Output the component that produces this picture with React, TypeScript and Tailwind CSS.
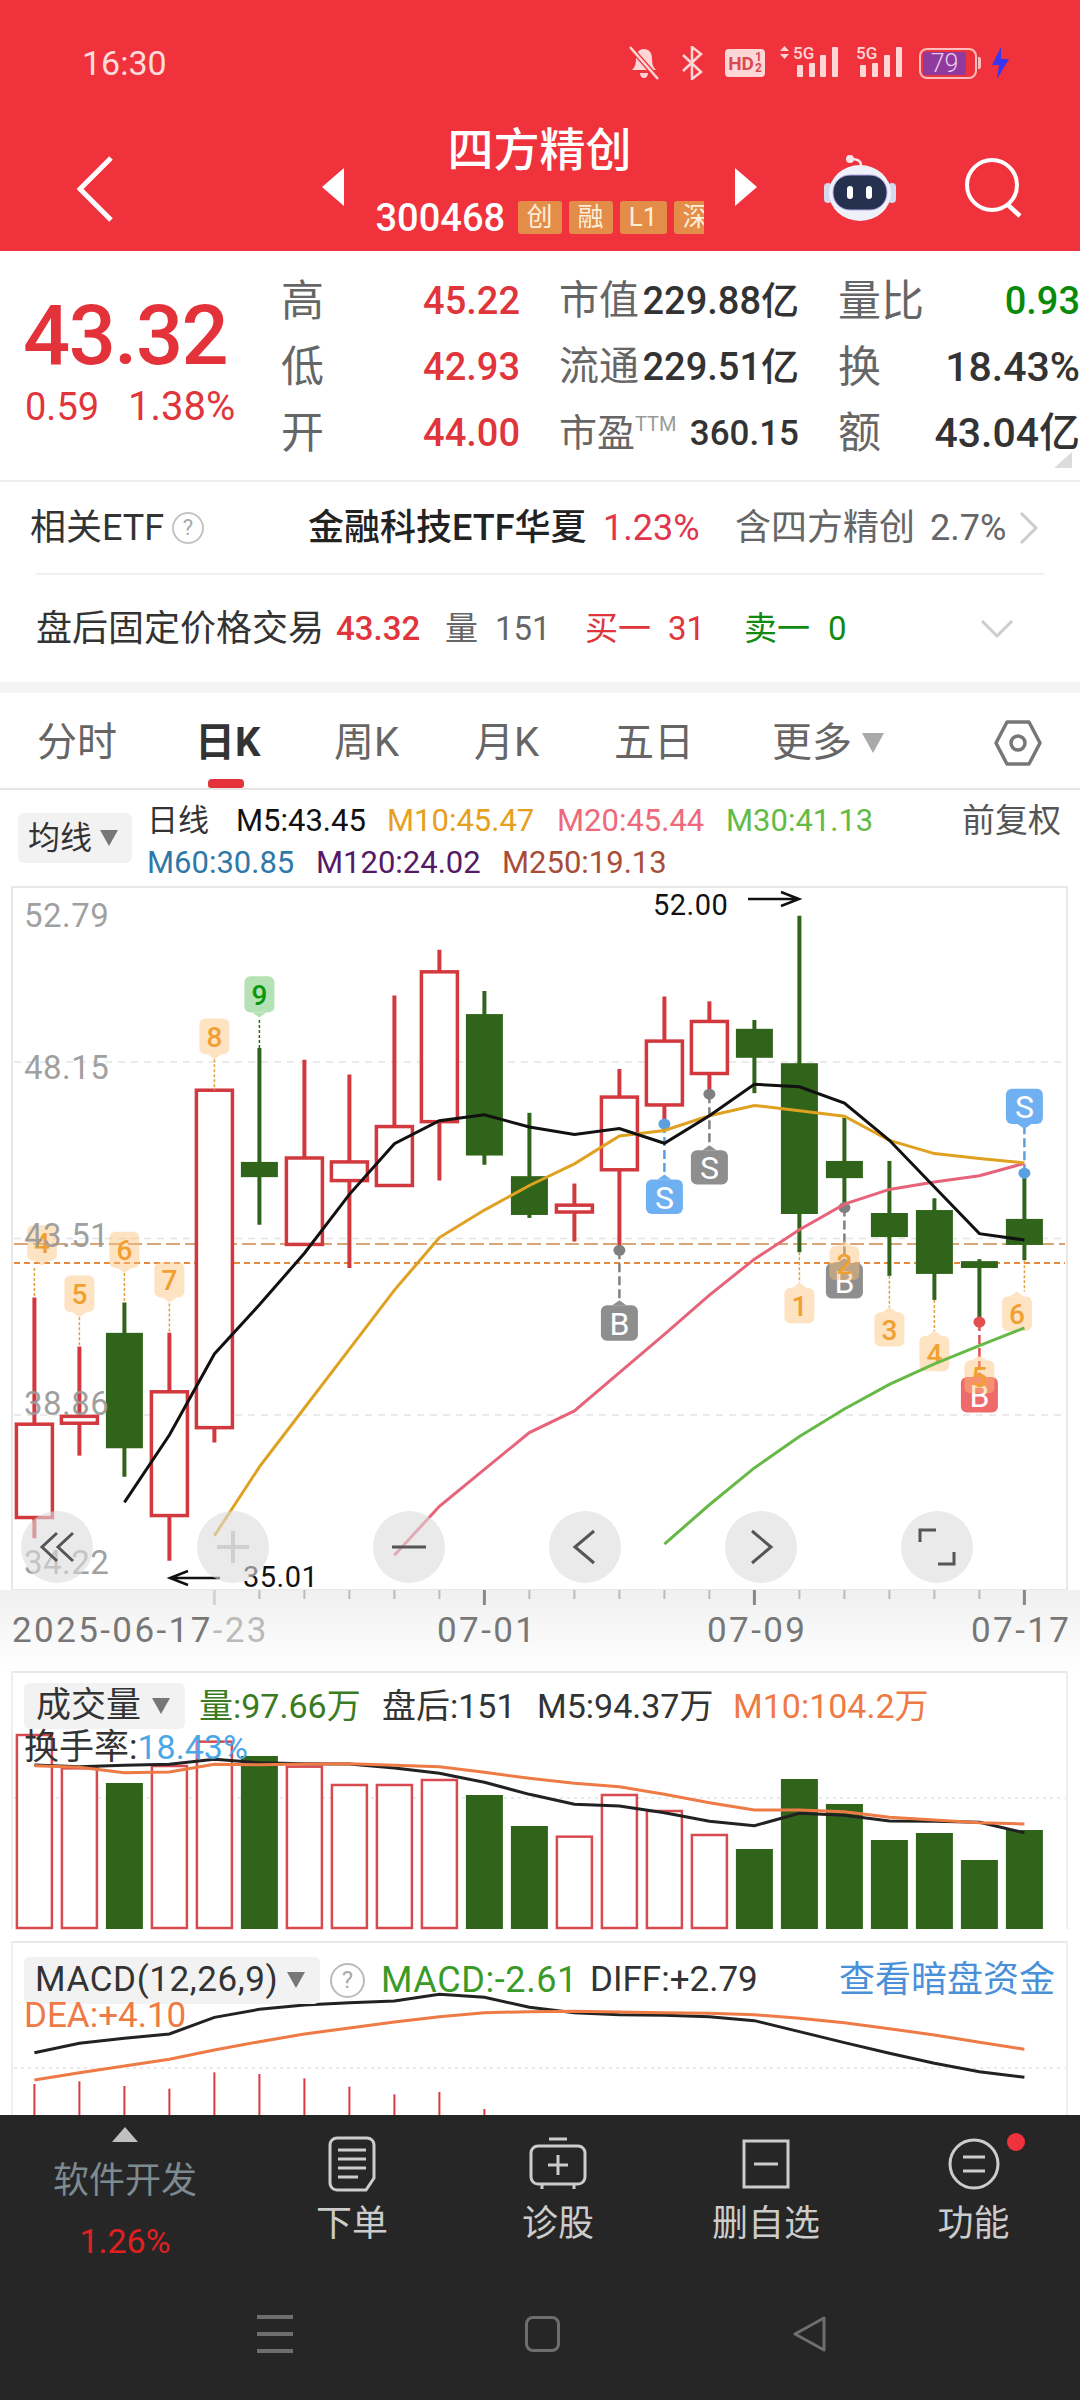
import React from "react";

const Y = (z: number) => z / 2.036 - 6;
const cx = (i: number) => 34.4 + 45 * i;
const RED = "#d1393f";
const GREEN = "#30641a";

const candles: [string, number, number, number, number][] = [
  ["r", 850, 1108, 1298, 1340], ["r", 950, 1092, 1106, 1172], ["g", 860, 922, 1157, 1215], ["r", 922, 1042, 1294, 1386],
  ["r", 428, 428, 1115, 1145], ["g", 342, 574, 605, 702], ["r", 366, 566, 742, 742], ["r", 396, 574, 612, 790],
  ["r", 235, 502, 622, 622], ["r", 142, 187, 492, 612], ["g", 226, 273, 561, 580], ["g", 474, 603, 682, 688],
  ["r", 618, 662, 676, 736], ["r", 385, 442, 590, 752], ["r", 237, 328, 458, 497], ["r", 247, 288, 394, 436],
  ["g", 285, 303, 362, 434], ["g", 73, 373, 680, 758], ["g", 484, 572, 607, 665], ["g", 572, 678, 727, 806],
  ["g", 648, 672, 802, 855], ["g", 772, 776, 790, 900], ["g", 598, 690, 743, 774],
];

const ma5 = [1267, 1130, 965, 865, 760, 640, 537, 490, 478, 503, 518, 506, 536, 480, 416, 421, 454, 530, 625, 720, 733];
const ma10 = [1335, 1195, 1075, 955, 835, 728, 672, 622, 578, 521, 510, 480, 459, 470, 481, 530, 557, 567, 576];
const ma20 = [1375, 1275, 1200, 1125, 1081, 1003, 925, 845, 772, 712, 660, 630, 615, 602, 577];
const ma30 = [1352, 1272, 1197, 1133, 1077, 1027, 985, 948, 912];

const pts = (arr: number[], start: number) => arr.map((z, k) => `${cx(start + k)},${Y(z)}`).join(" ");

const numTags: [number, number, number, string, boolean][] = [
  [42, 703, 775, "4", true], [cx(1), 805, 880, "5", true], [cx(2), 716, 790, "6", true], [cx(3), 778, 850, "7", true],
  [cx(4), 282, 355, "8", true], [cx(17), 830, 903, "1", false], [cx(18), 745, 815, "2", false], [cx(19), 880, 950, "3", false],
  [cx(20), 928, 1000, "4", false], [cx(21), 978, 1045, "5", false], [1017, 848, 918, "6", false],
];
const numLines: [number, number, number][] = [
  [0, 790, 850], [1, 890, 950], [2, 800, 860], [3, 862, 922], [4, 365, 428], [17, 758, 820], [19, 806, 870], [20, 855, 918], [22, 774, 838],
];
const trade: [number, number, number, string, string, number][] = [
  [13, 866, 938, "B", "#8e8e8e", 754], [14, 610, 680, "S", "#6fb0f2", 497], [15, 550, 620, "S", "#8e8e8e", 436],
  [18, 780, 852, "B", "#8e8e8e", 667], [21, 1012, 1084, "B", "#ef6a6a", 900], [22, 425, 497, "S", "#6fb0f2", 597],
];

function Tag({ x, t, b, up, fill, children, color, w = 30, alpha = 1 }: { x: number; t: number; b: number; up: boolean; fill: string; color: string; w?: number; alpha?: number; children: string }) {
  const top = Y(t);
  const bot = Y(b);
  const pointer = up ? `${x - 7},${top} ${x},${top - 5} ${x + 7},${top}` : `${x - 7},${bot} ${x},${bot + 5} ${x + 7},${bot}`;
  return (
    <g>
      <rect x={x - w / 2} y={top} width={w} height={bot - top} rx={6} fill={fill} fillOpacity={alpha} />
      <polygon points={pointer} fill={fill} fillOpacity={alpha} />
      <text x={x} y={(top + bot) / 2 + 1} textAnchor="middle" dominantBaseline="central" fontSize={w > 30 ? 32 : 28} fill={color} fontWeight={w > 30 ? 400 : 500}>
        {children}
      </text>
    </g>
  );
}

function PriceChart() {
  return (
    <svg width={1080} height={704} className="block">
      <rect x={12} y={1} width={1055} height={703} fill="white" stroke="#e8e8e8" strokeWidth={2} />
      {[1062, 1238.5, 1415].map((y) => (
        <line key={y} x1={14} x2={1065} y1={y - 886} y2={y - 886} stroke="#e4e4e4" strokeWidth={1.5} strokeDasharray="7 6" />
      ))}
      <line x1={14} x2={1065} y1={358} y2={358} stroke="#d9a679" strokeWidth={2} strokeDasharray="14 5" />
      <line x1={14} x2={1065} y1={377} y2={377} stroke="#e8893c" strokeWidth={2} strokeDasharray="6 4" />
      {candles.map(([c, h, t, b, l], i) => {
        const col = c === "r" ? RED : GREEN;
        return (
          <g key={i}>
            <line x1={cx(i)} x2={cx(i)} y1={Y(h)} y2={Y(l)} stroke={col} strokeWidth={4} />
            {c === "r" ? (
              <rect x={cx(i) - 18} y={Y(t)} width={36} height={Y(b) - Y(t)} fill="white" stroke={col} strokeWidth={3.5} />
            ) : (
              <rect x={cx(i) - 18.5} y={Y(t)} width={37} height={Y(b) - Y(t)} fill={col} />
            )}
          </g>
        );
      })}
      <line x1={cx(5)} x2={cx(5)} y1={Y(285)} y2={Y(342)} stroke={GREEN} strokeWidth={1.5} strokeDasharray="3 2" />
      {numLines.map(([i, a, b]) => (
        <line key={i} x1={cx(i)} x2={cx(i)} y1={Y(a)} y2={Y(b)} stroke="#e0a040" strokeWidth={1.5} strokeDasharray="3 2" />
      ))}
      {trade.map(([i, t, b, s, col, dot]) => {
        const end = t > dot ? t : b;
        const lineCol = col === "#6fb0f2" ? "#5b9fe0" : col === "#ef6a6a" ? "#e05050" : "#808080";
        return (
          <g key={i}>
            <line x1={cx(i)} x2={cx(i)} y1={Y(dot)} y2={Y(end)} stroke={lineCol} strokeWidth={2.5} strokeDasharray="9 4" />
            <ellipse cx={cx(i)} cy={Y(dot)} rx={6} ry={5.5} fill={lineCol} />
            <Tag x={cx(i)} t={t} b={b} up={t > dot} fill={col} color="white" w={37}>
              {s}
            </Tag>
          </g>
        );
      })}
      {numTags.map(([x, t, b, s, down], k) => (
        <Tag key={k} x={x} t={t} b={b} up={!down} fill="#fdc27a" color="#f0a030" alpha={0.45}>
          {s}
        </Tag>
      ))}
      <Tag x={cx(5)} t={196} b={270} up={false} fill="#b4e2b4" color="#0b960b">
        9
      </Tag>
      {[["52.79", 29], ["48.15", 181], ["43.51", 349], ["38.86", 517], ["34.22", 676]].map(([t, y]) => (
        <text key={t as string} x={24} y={y as number} dominantBaseline="central" fontSize={33} fill="#9a9a9a" fillOpacity={0.95} letterSpacing={0.5}>
          {t}
        </text>
      ))}
      <polyline points={pts(ma30, 14)} fill="none" stroke="#67b946" strokeWidth={3} />
      <polyline points={pts(ma20, 8)} fill="none" stroke="#e6637a" strokeWidth={3} />
      <polyline points={pts(ma10, 4)} fill="none" stroke="#e0a020" strokeWidth={3} />
      <polyline points={pts(ma5, 2)} fill="none" stroke="#111111" strokeWidth={3} />
      <text x={653} y={19} dominantBaseline="central" fontSize={29} fill="#111" letterSpacing={0.5}>52.00</text>
      <path d="M748 13H799M781 6l18 7-18 7" fill="none" stroke="#111" strokeWidth={2.5} />
      <text x={243} y={691} dominantBaseline="central" fontSize={29} fill="#111" letterSpacing={0.5}>35.01</text>
      <path d="M220 692H170M188 685l-18 7 18 7" fill="none" stroke="#111" strokeWidth={2.5} />
    </svg>
  );
}

function CircleBtn({ children }: { children: React.ReactNode }) {
  return <div className="w-[72px] h-[72px] rounded-full bg-[#dcdcdc]/60 flex items-center justify-center">{children}</div>;
}

function ChartButtons() {
  const s = { width: 40, height: 40, viewBox: "0 0 40 40", fill: "none", strokeWidth: 3 };
  return (
    <div className="absolute left-[21px] top-[625px] w-[952px] flex justify-between">
      <CircleBtn><svg {...s} stroke="#555"><path d="M20 6 5 20l15 14M36 6 21 20l15 14" /></svg></CircleBtn>
      <CircleBtn><svg {...s} stroke="#cfcfcf"><path d="M20 4V36M4 20H36" strokeWidth={4} /></svg></CircleBtn>
      <CircleBtn><svg {...s} stroke="#555"><path d="M3 20H37" /></svg></CircleBtn>
      <CircleBtn><svg {...s} stroke="#555"><path d="M29 4 10 20l19 16" /></svg></CircleBtn>
      <CircleBtn><svg {...s} stroke="#555"><path d="M11 4l19 16-19 16" /></svg></CircleBtn>
      <CircleBtn><svg {...s} stroke="#555"><path d="M3 15V3H19M37 25V37H21" /></svg></CircleBtn>
    </div>
  );
}

const volTops: [string, number][] = [
  ["r", 225], ["r", 325], ["g", 369], ["r", 318], ["r", 245], ["g", 288], ["r", 320], ["r", 375], ["r", 375], ["r", 360], ["g", 405], ["g", 498],
  ["r", 530], ["r", 405], ["r", 453], ["r", 525], ["g", 567], ["g", 357], ["g", 432], ["g", 540], ["g", 519], ["g", 600], ["g", 510],
];
const volBlack = [315, 320, 316, 313, 298, 308, 311, 312, 324, 340, 367, 403, 433, 438, 458, 484, 497, 460, 466, 483, 484, 487, 518];
const volOrange = [317, 322, 338, 336, 313, 314, 312, 311, 316, 320, 337, 355, 370, 380, 403, 428, 450, 450, 455, 472, 480, 488, 492];
const V = (z: number) => z / 3 - 11;
const vpts = (a: number[]) => a.map((z, i) => `${cx(i)},${V(z)}`).join(" ");

function Caret({ className = "" }: { className?: string }) {
  return (
    <svg width={18} height={16} viewBox="0 0 18 16" className={className}>
      <polygon points="0,0 18,0 9,16" fill="#777" />
    </svg>
  );
}

function VolumePanel() {
  return (
    <div className="relative h-[270px]">
      <svg width={1080} height={270} className="block">
        <line x1={12} x2={1067} y1={1} y2={1} stroke="#e8e8e8" strokeWidth={2} />
        <line x1={12} x2={12} y1={0} y2={258} stroke="#eeeeee" strokeWidth={2} />
        <line x1={1067} x2={1067} y1={0} y2={258} stroke="#eeeeee" strokeWidth={2} />
        <line x1={14} x2={1065} y1={127} y2={127} stroke="#e4e4e4" strokeWidth={1.5} strokeDasharray="3 4" />
        {volTops.map(([c, t], i) =>
          c === "r" ? (
            <rect key={i} x={cx(i) - 17.5} y={V(t)} width={35} height={257 - V(t)} fill="white" stroke="#d84a50" strokeWidth={2.5} />
          ) : (
            <rect key={i} x={cx(i) - 18.5} y={V(t)} width={37} height={258 - V(t)} fill={GREEN} />
          )
        )}
        <polyline points={vpts(volBlack)} fill="none" stroke="#222" strokeWidth={3} />
        <polyline points={vpts(volOrange)} fill="none" stroke="#ee7a45" strokeWidth={3} />
      </svg>
      <div className="absolute left-[24px] top-[12px] flex items-center">
        <div className="w-[161px] h-[46px] bg-[#f2f2f2] rounded-[6px] flex items-center pl-[12px] gap-[11px] text-[35px] text-[#333]">
          成交量<Caret />
        </div>
        <div className="ml-[14px] flex text-[34px] leading-[46px] whitespace-nowrap">
          <span className="text-[#3a7a22] w-[183px]">量:97.66万</span>
          <span className="text-[#333] w-[155px]">盘后:151</span>
          <span className="text-[#333] w-[196px]">M5:94.37万</span>
          <span className="text-[#ee7a45]">M10:104.2万</span>
        </div>
      </div>
      <div className="absolute left-[24px] top-[56px] text-[35px] leading-[40px] text-[#333] whitespace-nowrap">
        换手率:<span className="text-[#4aa8e6] text-[34px]">18.43%</span>
      </div>
    </div>
  );
}

const macdBlack = [1178, 1150, 1135, 1122, 1072, 1048, 1035, 1028, 1023, 1003, 1012, 1042, 1058, 1064, 1066, 1070, 1082, 1115, 1148, 1180, 1210, 1235, 1252];
const macdOrange = [1260, 1238, 1218, 1198, 1170, 1145, 1122, 1104, 1086, 1070, 1058, 1055, 1054, 1056, 1058, 1060, 1064, 1075, 1088, 1106, 1125, 1147, 1168];
const macdBars = [1272, 1264, 1278, 1286, 1237, 1242, 1255, 1280, 1303, 1296, 1347];
const M = (z: number) => z / 3 - 281;

function MacdPanel() {
  return (
    <div className="relative h-[174px]">
      <svg width={1080} height={174} className="block">
        <line x1={12} x2={1067} y1={1} y2={1} stroke="#e8e8e8" strokeWidth={2} />
        <line x1={12} x2={12} y1={0} y2={174} stroke="#eeeeee" strokeWidth={2} />
        <line x1={1067} x2={1067} y1={0} y2={174} stroke="#eeeeee" strokeWidth={2} />
        <line x1={14} x2={1065} y1={127} y2={127} stroke="#e4e4e4" strokeWidth={1.5} strokeDasharray="3 4" />
        {macdBars.map((z, i) => (
          <line key={i} x1={cx(i)} x2={cx(i)} y1={M(z)} y2={174} stroke="#d83a44" strokeWidth={2} />
        ))}
        <polyline points={macdBlack.map((z, i) => `${cx(i)},${M(z)}`).join(" ")} fill="none" stroke="#222" strokeWidth={3} />
        <polyline points={macdOrange.map((z, i) => `${cx(i)},${M(z)}`).join(" ")} fill="none" stroke="#ee7a45" strokeWidth={3} />
      </svg>
      <div className="absolute left-[24px] top-[12px] right-[25px] flex items-center">
        <div className="w-[296px] h-[47px] bg-[#f2f2f2] rounded-[6px] flex items-center pl-[11px] gap-[9px] text-[35px] tracking-[0.6px] text-[#333] whitespace-nowrap">
          MACD(12,26,9)<Caret />
        </div>
        <div className="ml-[10px] w-[35px] h-[35px] rounded-full border-2 border-[#bbb] text-[#aaa] text-[24px] flex items-center justify-center">?</div>
        <span className="ml-[16px] w-[209px] text-[36px] tracking-[0.6px] text-[#3a9a28] whitespace-nowrap">MACD:-2.61</span>
        <span className="text-[35px] text-[#333] whitespace-nowrap">DIFF:+2.79</span>
        <span className="ml-auto text-[36px] text-[#4a90d9] whitespace-nowrap">查看暗盘资金</span>
      </div>
      <div className="absolute left-[24px] top-[56px] text-[35px] leading-[38px] text-[#ee7a45]">DEA:+4.10</div>
    </div>
  );
}

function StatusBar() {
  return (
    <div className="h-[126px] flex items-center pl-[82px] pr-[70px] text-[#ffdcdc]">
      <span className="text-[34px] leading-none">16:30</span>
      <div className="ml-auto flex items-center">
        <svg width={34} height={34} viewBox="0 0 34 34" fill="#ffd6d6">
          <path d="M17 3c5 0 8 4 8 9 0 6 1 9 4 12H5c3-3 4-6 4-12 0-5 3-9 8-9zM13 27h8c0 3-2 5-4 5s-4-2-4-5z" />
          <path d="M3 1 31 33" stroke="#ef323c" strokeWidth={5} />
          <path d="M3 1 31 33" stroke="#ffd6d6" strokeWidth={2.5} />
        </svg>
        <svg width={22} height={34} viewBox="0 0 22 34" fill="none" stroke="#ffd6d6" strokeWidth={2.5} className="ml-[20px]">
          <path d="M2 9l18 17-9 7V1l9 7L2 25" />
        </svg>
        <div className="ml-[22px] w-[40px] h-[28px] bg-[#ffd6d6] rounded-[4px] flex items-center justify-center text-[#d84a50] text-[19px] font-bold leading-none">
          HD
          <span className="flex flex-col text-[12px] leading-[11px] ml-[1px]">
            <span>1</span>
            <span>2</span>
          </span>
        </div>
        <svg width={60} height={36} viewBox="0 0 60 36" fill="#ffd6d6" className="ml-[15px]">
          <polygon points="0,6 4.5,1 9,6" /><polygon points="0,9 9,9 4.5,14" />
          <text x={13} y={14} fontSize={17} fontWeight={500}>5G</text>
          <rect x={17} y={20} width={6} height={12} rx={1} /><rect x={29} y={18} width={6} height={14} rx={1} /><rect x={40} y={10} width={6} height={22} rx={1} /><rect x={52} y={2} width={6} height={30} rx={1} />
        </svg>
        <svg width={48} height={36} viewBox="0 0 48 36" fill="#ffd6d6" className="ml-[15px]">
          <text x={1} y={14} fontSize={17} fontWeight={500}>5G</text>
          <rect x={5} y={20} width={6} height={12} rx={1} /><rect x={17} y={18} width={6} height={14} rx={1} /><rect x={29} y={10} width={6} height={22} rx={1} /><rect x={41} y={2} width={6} height={30} rx={1} />
        </svg>
        <div className="ml-[16px] w-[58px] h-[31px] rounded-[8px] border-2 border-[#ffbcbc] p-[2px] flex">
          <div className="w-[43px] bg-[#8f3a9c] text-[25px] leading-[23px] font-light text-[#e8c8ee] text-center">79</div>
        </div>
        <div className="w-[3px] h-[12px] ml-[1px] bg-[#ffbcbc] rounded-r-[2px]" />
        <svg width={20} height={32} viewBox="0 0 20 32" className="ml-[9px]" fill="#3a35f0">
          <polygon points="11,0 2,18 9,18 7,32 19,12 11,12" />
        </svg>
      </div>
    </div>
  );
}

function Robot() {
  return (
    <svg width={72} height={66} viewBox="0 0 72 66">
      <path d="M37 10C37 6 33 4 27 4" stroke="#f6e6ea" strokeWidth={2.5} fill="none" />
      <circle cx={26} cy={4} r={4} fill="#f6e6ea" />
      <rect x={0} y={28} width={8} height={20} rx={4} fill="#d6d8ee" />
      <rect x={64} y={28} width={8} height={20} rx={4} fill="#d6d8ee" />
      <ellipse cx={36} cy={38} rx={31} ry={28} fill="#eef0fa" />
      <rect x={9} y={20} width={54} height={35} rx={17} fill="#24304e" stroke="#b9a8e8" strokeWidth={1} />
      <rect x={23} y={31} width={6} height={13} rx={3} fill="white" />
      <rect x={42} y={31} width={6} height={13} rx={3} fill="white" />
    </svg>
  );
}

function NavRow() {
  return (
    <div className="h-[125px] flex items-center pl-[77px]">
      <svg width={36} height={66} viewBox="0 0 36 66" fill="none" stroke="white" strokeWidth={5}>
        <path d="M34 2 3 33l31 31" />
      </svg>
      <svg width={22} height={38} viewBox="0 0 22 38" className="ml-[209px] mt-[-4px]" fill="white">
        <polygon points="22,0 22,38 0,19" />
      </svg>
      <div className="w-[391px] flex flex-col items-center">
        <div className="text-[46px] leading-[50px] font-medium text-white mt-[-18px]">四方精创</div>
        <div className="flex items-center mt-[26px] h-[33px] w-[328px] overflow-hidden">
          <span className="text-[38px] font-medium text-white leading-none w-[142px]">300468</span>
          {["创", "融"].map((t) => (
            <span key={t} className="w-[44px] h-[33px] mr-[7px] shrink-0 bg-[#e38d48] rounded-[3px] text-[26px] leading-[33px] text-[#fdeeda] text-center">{t}</span>
          ))}
          <span className="w-[47px] h-[33px] mr-[7px] shrink-0 bg-[#e38d48] rounded-[3px] text-[26px] leading-[33px] text-[#fdeeda] text-center">L1</span>
          <span className="w-[30px] h-[33px] shrink-0 overflow-hidden bg-[#e38d48] rounded-l-[3px] text-[26px] leading-[33px] text-[#fdeeda] pl-[9px] whitespace-nowrap">深</span>
        </div>
      </div>
      <svg width={22} height={38} viewBox="0 0 22 38" className="mt-[-4px]" fill="white">
        <polygon points="0,0 0,38 22,19" />
      </svg>
      <div className="ml-[67px] mt-[-2px]"><Robot /></div>
      <svg width={60} height={60} viewBox="0 0 60 60" fill="none" stroke="white" strokeWidth={4} className="ml-[68px] mt-[-2px]">
        <circle cx={28} cy={27} r={25} />
        <path d="M44 47 56 58" strokeWidth={4.5} />
      </svg>
    </div>
  );
}

type Cell = { label: React.ReactNode; value: string; cls: string; lab: string };
const cells: Cell[] = [
  { label: "高", value: "45.22", cls: "text-[38px] text-[#e0353b]", lab: "text-[43px]" },
  { label: "市值", value: "229.88亿", cls: "text-[38px] text-[#333]", lab: "text-[40px]" },
  { label: "量比", value: "0.93", cls: "text-[38px] text-[#0a8a0a]", lab: "text-[43px]" },
  { label: "低", value: "42.93", cls: "text-[38px] text-[#e0353b]", lab: "text-[43px]" },
  { label: "流通", value: "229.51亿", cls: "text-[38px] text-[#333]", lab: "text-[40px]" },
  { label: "换", value: "18.43%", cls: "text-[41px] text-[#333]", lab: "text-[43px]" },
  { label: "开", value: "44.00", cls: "text-[38px] text-[#e0353b]", lab: "text-[43px]" },
  { label: <>市盈<span className="text-[20px] align-top text-[#999] leading-none">TTM</span></>, value: "360.15", cls: "text-[35px] text-[#333]", lab: "text-[38px]" },
  { label: "额", value: "43.04亿", cls: "text-[41px] text-[#333]", lab: "text-[43px]" },
];

function Quote() {
  return (
    <div className="relative h-[231px] flex border-b-2 border-[#eeeeee]">
      <div className="w-[281px] pl-[23px] pt-[37px]">
        <div className="text-[83px] leading-[96px] font-medium text-[#e3323a] tracking-[-1.5px]">43.32</div>
        <div className="flex text-[38px] leading-[44px] text-[#e0353b] mt-[1px] pl-[2px]">
          <span className="w-[103px]">0.59</span>
          <span className="text-[40px]">1.38%</span>
        </div>
      </div>
      <div className="grid grid-cols-[239px_240px_242px] gap-x-[39px] grid-rows-[66px_66px_66px] pt-[17px] content-start">
        {cells.map((c, i) => (
          <div key={i} className="flex items-center justify-between whitespace-nowrap">
            <span className={`${c.lab} leading-none text-[#666]`}>{c.label}</span>
            <span className={`${c.cls} leading-none font-medium`}>{c.value}</span>
          </div>
        ))}
      </div>
      <svg width={18} height={16} viewBox="0 0 18 16" className="absolute right-[8px] top-[201px]">
        <polygon points="18,0 18,16 0,16" fill="#dcdcdc" />
      </svg>
    </div>
  );
}

function EtfRow() {
  return (
    <div className="h-[91px] flex items-center pl-[30px] text-[36px] whitespace-nowrap leading-none">
      <span className="text-[#333] w-[142px]">相关ETF</span>
      <span className="w-[32px] h-[32px] rounded-full border-2 border-[#c4c4c4] text-[#aaa] text-[22px] flex items-center justify-center">?</span>
      <span className="ml-[104px] text-[#222] font-medium w-[275px]">金融科技ETF华夏</span>
      <span className="ml-[20px] text-[#e0354b] w-[132px]">1.23%</span>
      <span className="text-[#666] w-[195px]">含四方精创</span>
      <span className="text-[#666] w-[89px]">2.7%</span>
      <svg width={20} height={34} viewBox="0 0 20 34" fill="none" stroke="#cccccc" strokeWidth={3}><path d="M2 2l15 15L2 32" /></svg>
    </div>
  );
}

function AfterRow() {
  return (
    <div className="mx-[36px] w-[1008px] h-[109px] border-t-2 border-[#f0f0f0] flex items-center text-[33px] whitespace-nowrap leading-none">
      <span className="text-[36px] text-[#333] w-[300px]">盘后固定价格交易</span>
      <span className="text-[#e0353b] font-medium w-[109px]">43.32</span>
      <span className="text-[#666] w-[50px]">量</span>
      <span className="text-[#666] w-[90px]">151</span>
      <span className="text-[#e0353b] w-[83px]">买一</span>
      <span className="text-[#e0353b] w-[76px]">31</span>
      <span className="text-[#128a12] w-[84px]">卖一</span>
      <span className="text-[#128a12] w-[152px]">0</span>
      <svg width={34} height={20} viewBox="0 0 34 20" fill="none" stroke="#cccccc" strokeWidth={3}><path d="M2 2l15 15L32 2" /></svg>
    </div>
  );
}

function Tabs() {
  return (
    <div className="relative h-[97px] border-b-2 border-[#e6e6e6] flex items-center text-[40px] text-[#666] leading-none whitespace-nowrap pt-[5px]">
      <span className="ml-[37px] w-[158px]">分时</span>
      <span className="w-[139px] font-bold text-[#333]">日K</span>
      <span className="w-[140px]">周K</span>
      <span className="w-[140px]">月K</span>
      <span className="w-[158px]">五日</span>
      <span>更多</span>
      <svg width={22} height={20} viewBox="0 0 22 20" className="ml-[10px]"><polygon points="0,0 22,0 11,20" fill="#aaaaaa" /></svg>
      <svg width={48} height={46} viewBox="0 0 48 46" fill="none" stroke="#777" strokeWidth={3.5} className="ml-[110px]">
        <path d="M13 2h22l11 21-11 21H13L2 23z" strokeLinejoin="round" />
        <circle cx={24} cy={23} r={7} />
      </svg>
      <div className="absolute left-[208px] bottom-0 w-[36px] h-[9px] rounded-t-[4px] rounded-b-[3px] bg-[#e5323a]" />
    </div>
  );
}

function MaLegend() {
  return (
    <div className="h-[96px] flex pt-[23px] pl-[18px] text-[31px] whitespace-nowrap leading-none">
      <div className="w-[114px] h-[50px] bg-[#f2f2f2] rounded-[6px] flex items-center pl-[10px] gap-[8px] text-[32px] text-[#333]">
        均线<Caret />
      </div>
      <div className="ml-[15px] w-[930px] mt-[-14px]">
        <div className="flex h-[42px] items-center">
          <span className="text-[#333] w-[89px]">日线</span>
          <span className="text-[#111] w-[151px]">M5:43.45</span>
          <span className="text-[#e6a020] w-[170px]">M10:45.47</span>
          <span className="text-[#ee6a7a] w-[169px]">M20:45.44</span>
          <span className="text-[#62bb46] w-[236px]">M30:41.13</span>
          <span className="text-[#555] text-[33px]">前复权</span>
        </div>
        <div className="flex h-[42px] items-center">
          <span className="text-[#2f78a8] w-[169px]">M60:30.85</span>
          <span className="text-[#541a66] w-[186px]">M120:24.02</span>
          <span className="text-[#a84e38]">M250:19.13</span>
        </div>
      </div>
    </div>
  );
}

function DateAxis() {
  return (
    <div className="relative h-[81px] bg-gradient-to-b from-[#f0f0f0] to-white">
      <svg width={1080} height={16} className="block">
        {[214.4, 259.4, 304.4, 349.4, 394.4, 439.4, 484.4, 529.4, 574.4, 619.4, 664.4, 709.4, 754.4, 799.4, 844.4, 889.4, 934.4, 979.4, 1024.4].map((x, i) => {
          const big = i % 6 === 0;
          return <line key={x} x1={x} x2={x} y1={0} y2={big ? 15 : 9} stroke={i === 0 ? "#d4d4d4" : big ? "#888" : "#bbb"} strokeWidth={big ? 3 : 2} />;
        })}
      </svg>
      <div className="flex items-center text-[35px] text-[#777] leading-none tracking-[2.4px] whitespace-nowrap mt-[7px]">
        <span className="ml-[12px] w-[425px]">2025-06-17<span className="text-[#bbb]">-23</span></span>
        <span className="w-[270px]">07-01</span>
        <span className="w-[264px]">07-09</span>
        <span>07-17</span>
      </div>
    </div>
  );
}

function FootItem({ label, children, w }: { label: string; children: React.ReactNode; w: string }) {
  return (
    <div className={`${w} flex flex-col items-center`}>
      <div className="h-[56px] flex items-center justify-center relative">{children}</div>
      <span className="mt-[13px] text-[36px] leading-[38px] text-[#cccccc]">{label}</span>
    </div>
  );
}

function Footer() {
  const st = { fill: "none", stroke: "#cccccc", strokeWidth: 3 };
  return (
    <div className="flex-1 bg-[#262626] flex flex-col">
      <div className="h-[183px] flex pt-[21px] whitespace-nowrap">
        <div className="w-[250px] flex flex-col items-center mt-[-9px]">
          <svg width={26} height={15} viewBox="0 0 26 15"><polygon points="13,0 26,15 0,15" fill="#c0c0c0" /></svg>
          <span className="mt-[19px] text-[36px] leading-[40px] text-[#7d8a90]">软件开发</span>
          <span className="mt-[20px] text-[34px] leading-[40px] text-[#e02020]">1.26%</span>
        </div>
        <div className="flex">
          <FootItem label="下单" w="w-[204px]">
            <svg width={48} height={56} viewBox="0 0 48 56" {...st}>
              <path d="M9 2H39a7 7 0 0 1 7 7V42L38 54H9a7 7 0 0 1-7-7V9a7 7 0 0 1 7-7z" />
              <path d="M10 14H38M10 23H38M10 32H38M10 41H30" />
            </svg>
          </FootItem>
          <FootItem label="诊股" w="w-[208px]">
            <svg width={58} height={54} viewBox="0 0 58 54" {...st}>
              <path d="M20 2H38" />
              <rect x={2} y={9} width={54} height={38} rx={7} />
              <path d="M29 18V38M19 28H39M13 48v4M45 48v4" />
            </svg>
          </FootItem>
          <FootItem label="删自选" w="w-[208px]">
            <svg width={48} height={50} viewBox="0 0 48 50" {...st}>
              <rect x={2} y={2} width={44} height={46} />
              <path d="M12 25H36" />
            </svg>
          </FootItem>
          <FootItem label="功能" w="w-[207px]">
            <svg width={52} height={52} viewBox="0 0 52 52" {...st}>
              <circle cx={26} cy={26} r={24} />
              <path d="M15 19H37M15 33H37" />
            </svg>
            <span className="absolute left-[59px] top-[-3px] w-[18px] h-[18px] rounded-full bg-[#ef323c]" />
          </FootItem>
        </div>
      </div>
      <div className="flex items-center justify-center h-[72px] pl-[4px] gap-[232px]">
        <div className="flex flex-col gap-[13px]">
          <div className="w-[36px] h-[4px] bg-[#6e6e6e]" />
          <div className="w-[36px] h-[4px] bg-[#6e6e6e]" />
          <div className="w-[36px] h-[4px] bg-[#6e6e6e]" />
        </div>
        <div className="w-[35px] h-[36px] rounded-[8px] border-[3px] border-[#6e6e6e]" />
        <svg width={35} height={36} viewBox="0 0 35 36" fill="none" stroke="#6e6e6e" strokeWidth={3}>
          <path d="M32 2 3 18l29 16z" strokeLinejoin="round" />
        </svg>
      </div>
    </div>
  );
}

export default function App() {
  return (
    <div className="w-[1080px] h-[2400px] overflow-hidden bg-white flex flex-col font-[Roboto,'Noto_Sans_CJK_SC',sans-serif]">
      <div className="h-[251px] bg-[#ef323c] shrink-0">
        <StatusBar />
        <NavRow />
      </div>
      <Quote />
      <EtfRow />
      <AfterRow />
      <div className="h-[11px] bg-[#f4f4f4] shrink-0" />
      <Tabs />
      <MaLegend />
      <div className="relative h-[704px] shrink-0">
        <PriceChart />
        <ChartButtons />
      </div>
      <DateAxis />
      <VolumePanel />
      <MacdPanel />
      <Footer />
    </div>
  );
}
